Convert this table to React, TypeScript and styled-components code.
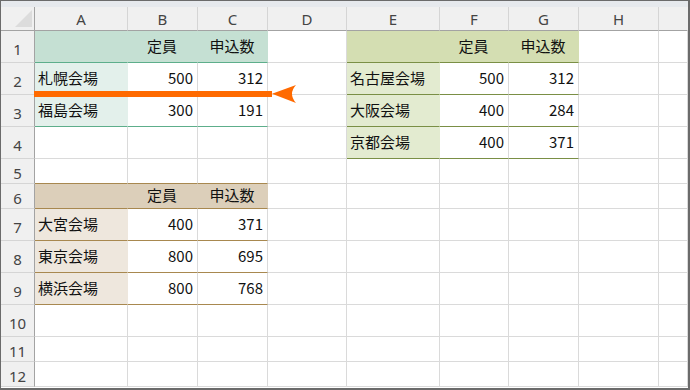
import React from 'react';
import styled, { createGlobalStyle } from 'styled-components';

const GlobalStyle = createGlobalStyle`
  html, body {
    margin: 0;
    padding: 0;
    background: #ffffff;
  }
`;

const COLS = ['A', 'B', 'C', 'D', 'E', 'F', 'G', 'H', ''];
const COL_WIDTHS = [93, 70, 70, 79, 93, 69, 70, 80, 29];
const ROW_HEIGHTS = [32, 32, 32, 32, 25, 25, 32, 32, 32, 32, 25, 25];
const GRID_LINE = '#dadada';

type Theme = { head: string; side: string; line: string };

const teal: Theme = { head: '#c5e0d3', side: '#e3f0eb', line: '#5dae8b' };
const olive: Theme = { head: '#d4deb2', side: '#e3ebd0', line: '#7a8f45' };
const brown: Theme = { head: '#dccfba', side: '#eee7dd', line: '#a8884f' };

type TableDef = {
  row: number;
  col: number;
  theme: Theme;
  topLine: boolean;
  rows: [string, number, number][];
};

const tables: TableDef[] = [
  {
    row: 1,
    col: 0,
    theme: teal,
    topLine: false,
    rows: [
      ['札幌会場', 500, 312],
      ['福島会場', 300, 191],
    ],
  },
  {
    row: 1,
    col: 4,
    theme: olive,
    topLine: false,
    rows: [
      ['名古屋会場', 500, 312],
      ['大阪会場', 400, 284],
      ['京都会場', 400, 371],
    ],
  },
  {
    row: 6,
    col: 0,
    theme: brown,
    topLine: true,
    rows: [
      ['大宮会場', 400, 371],
      ['東京会場', 800, 695],
      ['横浜会場', 800, 768],
    ],
  },
];

type CellDef = {
  text?: string;
  fill?: string;
  line?: string;
  align?: 'left' | 'right' | 'center';
};

// build the cell map from the table definitions
const cells: Record<string, CellDef> = {};
tables.forEach((t) => {
  if (t.topLine) {
    for (let c = 0; c < 3; c++) cells[`${t.row - 1}-${t.col + c}`] = { line: t.theme.line };
  }
  cells[`${t.row}-${t.col}`] = { fill: t.theme.head, line: t.theme.line };
  cells[`${t.row}-${t.col + 1}`] = { text: '定員', fill: t.theme.head, line: t.theme.line, align: 'center' };
  cells[`${t.row}-${t.col + 2}`] = { text: '申込数', fill: t.theme.head, line: t.theme.line, align: 'center' };
  t.rows.forEach((r, i) => {
    const y = t.row + 1 + i;
    cells[`${y}-${t.col}`] = { text: r[0], fill: t.theme.side, line: t.theme.line, align: 'left' };
    cells[`${y}-${t.col + 1}`] = { text: String(r[1]), line: t.theme.line, align: 'right' };
    cells[`${y}-${t.col + 2}`] = { text: String(r[2]), line: t.theme.line, align: 'right' };
  });
});

const Frame = styled.div`
  position: relative;
  width: 690px;
  height: 390px;
  box-sizing: border-box;
  border-style: solid;
  border-color: #6b6b6b;
  border-width: 1px 2px 2px 1px;
  background: #ffffff;
  overflow: hidden;
`;

const TopBand = styled.div`
  height: 6px;
  background: #e6e9ed;
`;

const Sheet = styled.div`
  display: grid;
  grid-template-columns: 34px ${COL_WIDTHS.map((w) => `${w}px`).join(' ')};
  grid-template-rows: 24px ${ROW_HEIGHTS.map((h) => `${h}px`).join(' ')};
`;

const Corner = styled.div`
  position: relative;
  box-sizing: border-box;
  background: #f0f0f0;
  border-right: 1px solid #a3a3a3;
  border-bottom: 1px solid #a3a3a3;

  &::after {
    content: '';
    position: absolute;
    right: 2px;
    bottom: 3px;
    width: 0;
    height: 0;
    border-left: 17px solid transparent;
    border-bottom: 17px solid #dcdcdc;
  }
`;

const ColHead = styled.div<{ $last?: boolean }>`
  box-sizing: border-box;
  display: flex;
  align-items: center;
  justify-content: center;
  background: #f0f0f0;
  border-right: 1px solid ${(p) => (p.$last ? 'transparent' : '#d5d5d5')};
  border-bottom: 1px solid #a3a3a3;
  font-family: 'Noto Sans', 'Liberation Sans', sans-serif;
  font-size: 15px;
  color: #444444;
  padding-top: 1px;
`;

const RowHead = styled.div`
  box-sizing: border-box;
  display: flex;
  align-items: center;
  justify-content: center;
  background: #f0f0f0;
  border-right: 1px solid #a3a3a3;
  border-bottom: 1px solid #d5d5d5;
  font-family: 'Noto Sans', 'Liberation Sans', sans-serif;
  font-size: 15px;
  color: #444444;
  padding-top: 4px;
`;

const Cell = styled.div<{ $fill?: string; $line?: string; $align?: string }>`
  box-sizing: border-box;
  display: flex;
  align-items: center;
  justify-content: ${(p) =>
    p.$align === 'right' ? 'flex-end' : p.$align === 'center' ? 'center' : 'flex-start'};
  padding: 0 4px 3px 3px;
  background: ${(p) => p.$fill || 'transparent'};
  border-right: 1px solid ${(p) => p.$fill || GRID_LINE};
  border-bottom: 1px solid ${(p) => p.$line || GRID_LINE};
  font-family: 'Noto Sans CJK JP', 'Noto Sans', sans-serif;
  font-size: 15px;
  line-height: 1;
  color: #111111;
  white-space: nowrap;
  overflow: hidden;
`;

const Arrow = styled.svg`
  position: absolute;
  left: 33px;
  top: 79px;
`;

const PointerArrow = () => (
  <Arrow width="266" height="28" viewBox="0 0 266 28">
    <rect x="0" y="11" width="238" height="6" fill="#ff6a00" />
    <path d="M238 13.8 L262 5 Q254 13.8 262 23 Z" fill="#ff6a00" />
  </Arrow>
);

const App: React.FC = () => {
  return (
    <>
      <GlobalStyle />
      <Frame>
        <TopBand />
        <Sheet>
          <Corner />
          {COLS.map((c, i) => (
            <ColHead key={i} $last={i === COLS.length - 1}>
              {c}
            </ColHead>
          ))}
          {ROW_HEIGHTS.map((_, r) => (
            <React.Fragment key={r}>
              <RowHead>{r + 1}</RowHead>
              {COLS.map((_, c) => {
                const cell = cells[`${r + 1}-${c}`] || {};
                return (
                  <Cell key={c} $fill={cell.fill} $line={cell.line} $align={cell.align}>
                    {cell.text}
                  </Cell>
                );
              })}
            </React.Fragment>
          ))}
        </Sheet>
        <PointerArrow />
      </Frame>
    </>
  );
};

export default App;
